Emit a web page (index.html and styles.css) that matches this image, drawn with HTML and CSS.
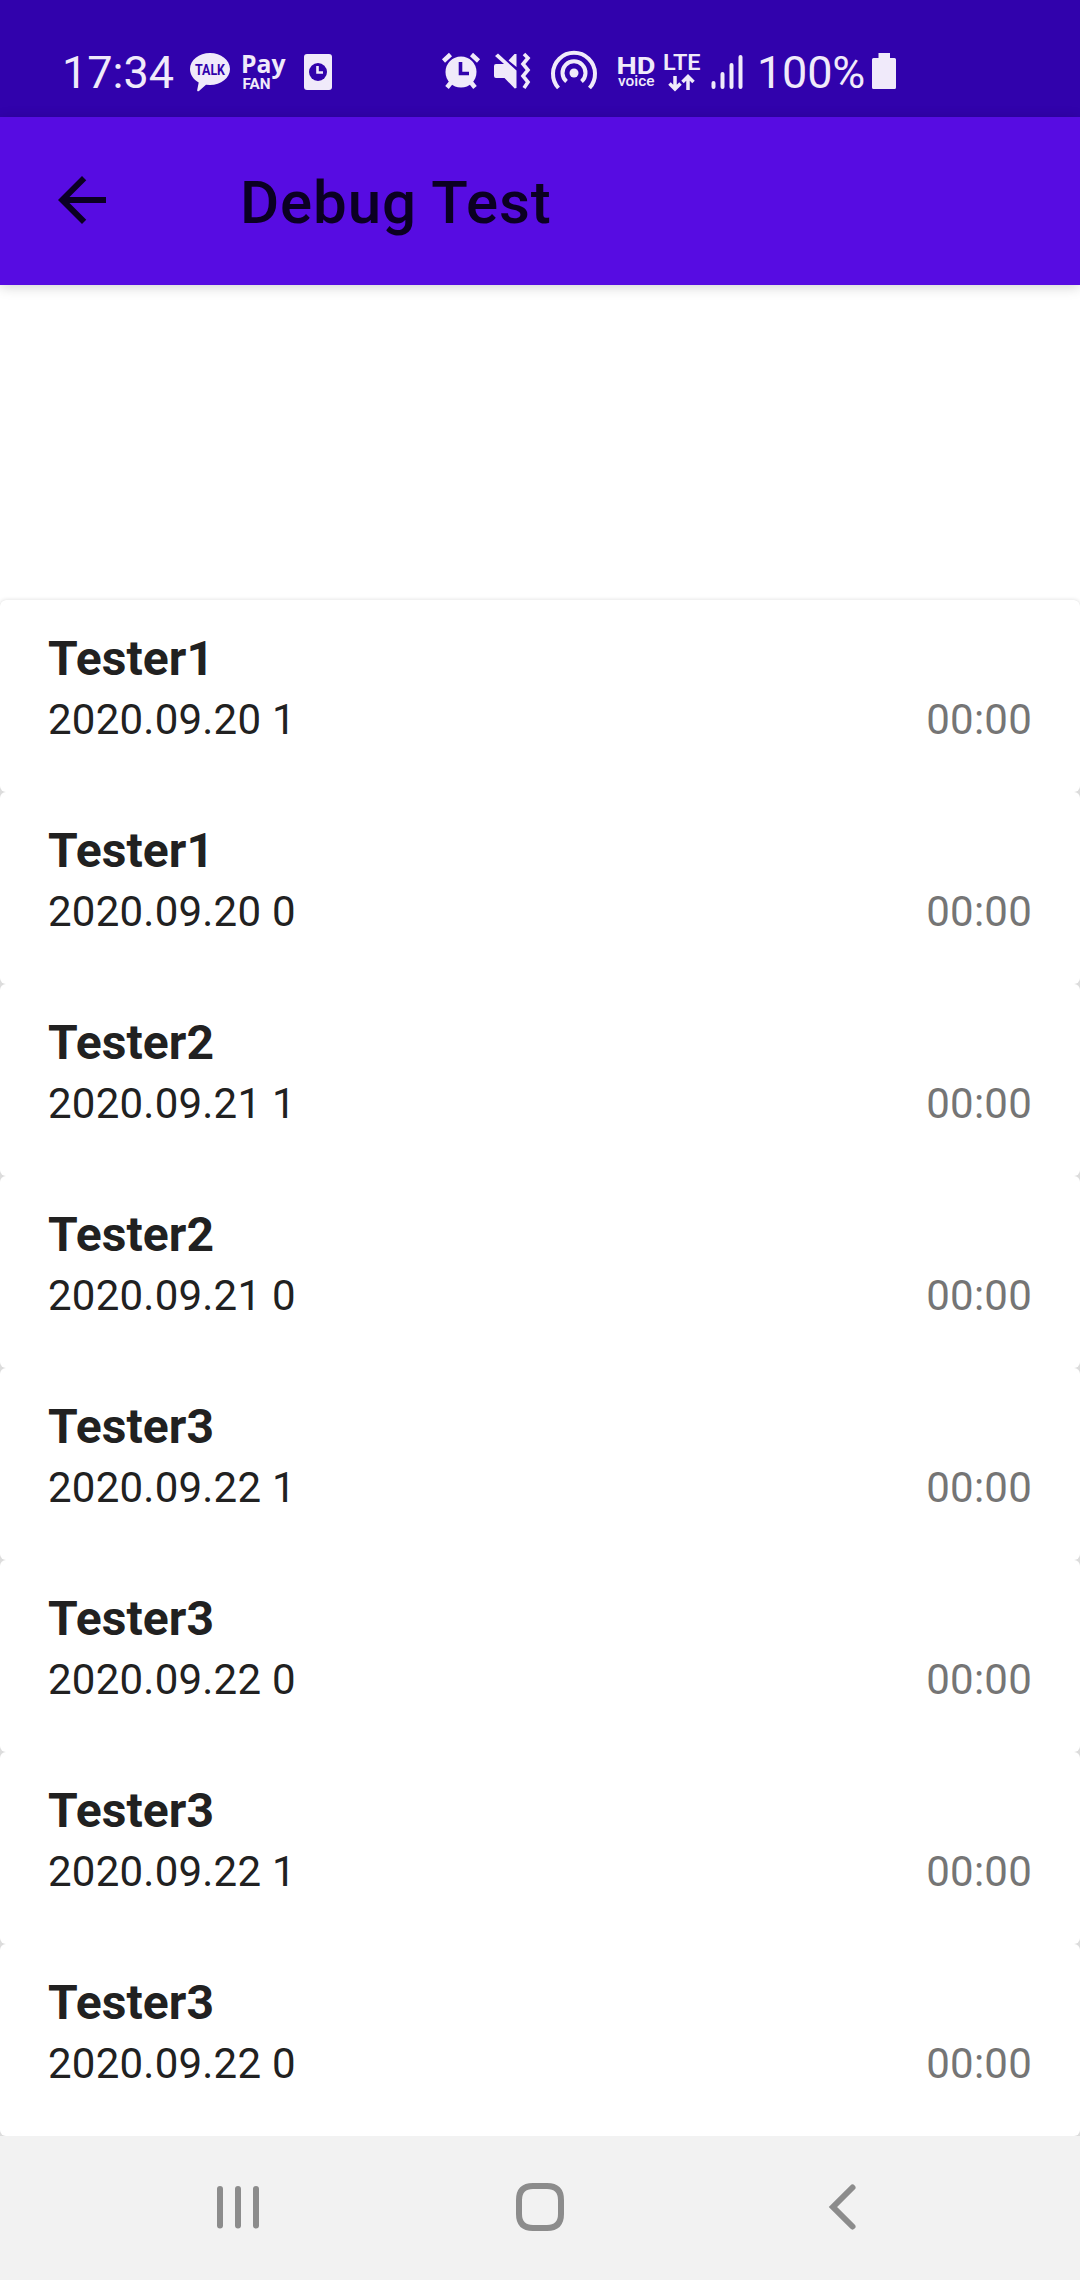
FILE: index.html
```html
<!DOCTYPE html>
<html lang="en">
<head>
<meta charset="utf-8">
<title>Debug Test</title>
<link rel="stylesheet" href="styles.css">
</head>
<body>
<div class="screen">
  <div class="status">
    <span class="clock">17:34</span>
    <svg class="talk" width="40" height="60" viewBox="190 40 40 60"><path class="fill" d="M210 53c11 0 20 7.200 20 16s-9 16-20 16l-4-.3-7 6.300c-1 .8-2 .2-1.800-1l1.500-7.500C193.500 79.500 190 74.700 190 69c0-8.800 9-16 20-16z"/><text class="ink" x="195" y="75" font-size="14.500" font-weight="700" textLength="30" lengthAdjust="spacingAndGlyphs">TALK</text></svg>
    <svg class="pay" width="44" height="60" viewBox="242 40 44 60"><text class="fill open" x="241" y="72.500" font-size="25" font-weight="700" textLength="44.500" lengthAdjust="spacingAndGlyphs">Pay</text><text class="fill" x="242.500" y="89" font-size="14.500" font-weight="700" textLength="28" lengthAdjust="spacingAndGlyphs">FAN</text></svg>
    <svg class="timer" width="28" height="60" viewBox="304 40 28 60"><rect class="fill" x="304" y="54" width="28" height="36" rx="3"/><circle class="ink" cx="318" cy="72" r="9"/><path class="line" stroke-width="2.600" d="M317.500 66v6.500h5.500"/></svg>
    <svg class="alarm" width="40" height="60" viewBox="441 40 40 60"><circle class="fill" cx="461" cy="72" r="15.500"/><path class="line" stroke-width="4.500" d="M443.500 61l7-6.500M478.500 61l-7-6.500M451 82.500l-4 5M471 82.500l4 5"/><path class="inkline" stroke-width="3.600" d="M460.500 62v11.500h8.500"/></svg>
    <svg class="mute" width="38" height="60" viewBox="493 40 38 60"><path class="fill" d="M496 64h8l-9-8 3-2.500 18.500 17V88l-1.800.5L504.500 78H496q-2-.2-2-2V66q0-1.800 2-2zM508.500 60.500l6-6.500h2v13z"/><path class="line" stroke-width="3.600" d="M524 54l4 4-5 6 5 6-5 6 5 6-4 6"/></svg>
    <svg class="spot" width="48" height="60" viewBox="550 40 48 60"><circle class="fill" cx="574" cy="73" r="4.500"/><path class="line" stroke-width="4" d="M558.500 88a21 21 0 1 1 31 0M566.500 81.500a11.500 11.500 0 1 1 15 0"/></svg>
    <svg class="hd" width="38" height="60" viewBox="617 40 38 60"><text class="fill" x="616.500" y="73.500" font-size="24" font-weight="700" textLength="39" lengthAdjust="spacingAndGlyphs">HD</text><text class="fill" x="618" y="86" font-size="15.500" font-weight="500" textLength="36.500" lengthAdjust="spacingAndGlyphs">voice</text></svg>
    <svg class="lte" width="37" height="60" viewBox="663 40 37 60"><text class="fill" x="663" y="70" font-size="22" font-weight="600" textLength="37.500" lengthAdjust="spacingAndGlyphs">LTE</text><path class="line" stroke-width="3.500" d="M675 76v12.500M669.500 83.500l5.500 5.500 5.500-5.500M688 90V77.500M682.500 82l5.500-5.500 5.500 5.500"/></svg>
    <svg class="signal" width="32" height="60" viewBox="711 40 32 60"><path class="line round" stroke-width="4" d="M713.500 83v4M722.500 74v13M731.500 65v22M740.500 57v30"/></svg>
    <span class="percent">100%</span>
    <svg class="battery" width="24" height="60" viewBox="872 40 24 60"><path class="fill" d="M878.500 53h11.500v5h4.500q1.500 0 1.500 1.500v28q0 1.500-1.500 1.500h-21q-1.500 0-1.500-1.500v-28q0-1.500 1.500-1.500h5z"/></svg>
  </div>
  <header class="appbar">
    <svg width="72" height="72" viewBox="0 0 24 24"><path d="M20 11H7.830l5.590-5.590L12 4l-8 8 8 8 1.410-1.410L7.830 13H20z"/></svg>
    <h1>Debug Test</h1>
  </header>
  <main>
    <div class="list">
      <div class="card"><b>Tester1</b><p><span>2020.09.20 1</span><time>00:00</time></p></div>
      <div class="card"><b>Tester1</b><p><span>2020.09.20 0</span><time>00:00</time></p></div>
      <div class="card"><b>Tester2</b><p><span>2020.09.21 1</span><time>00:00</time></p></div>
      <div class="card"><b>Tester2</b><p><span>2020.09.21 0</span><time>00:00</time></p></div>
      <div class="card"><b>Tester3</b><p><span>2020.09.22 1</span><time>00:00</time></p></div>
      <div class="card"><b>Tester3</b><p><span>2020.09.22 0</span><time>00:00</time></p></div>
      <div class="card"><b>Tester3</b><p><span>2020.09.22 1</span><time>00:00</time></p></div>
      <div class="card"><b>Tester3</b><p><span>2020.09.22 0</span><time>00:00</time></p></div>
    </div>
  </main>
  <nav class="navbar">
    <svg width="48" height="48" viewBox="0 0 48 48"><path d="M6 6v36.500M24 6v36.500M42 6v36.500"/></svg>
    <svg width="48" height="48" viewBox="0 0 48 48"><path d="M17 3h14q14 0 14 14v14q0 14-14 14H17Q3 45 3 31V17Q3 3 17 3z"/></svg>
    <svg width="48" height="48" viewBox="0 0 48 48"><path d="M34.500 4.500L15 24l19.500 19.500"/></svg>
  </nav>
</div>
</body>
</html>
```
FILE: styles.css
```css
* { box-sizing: border-box; }
body { margin: 0; font-family: Roboto, sans-serif; background: #fff; }
.screen { display: flex; flex-direction: column; width: 1080px; height: 2280px; }
svg { display: block; flex: none; }

.status { display: flex; height: 117px; padding: 40px 0 0 62px; background: #3102ac; color: #f0eafa; font-size: 45px; line-height: 66px; white-space: nowrap; }
.status svg { font-family: Roboto, sans-serif; overflow: visible; }
.fill { fill: #f0eafa; }
.ink { fill: #3102ac; }
.line { fill: none; stroke: #f0eafa; }
.inkline { fill: none; stroke: #3102ac; }
.round { stroke-linecap: round; }
.open { font-family: "Open Sans", sans-serif; }
.clock { width: 128px; }
.pay { margin-left: 12px; }
.timer { margin-left: 18px; }
.alarm { margin-left: 109px; }
.mute { margin-left: 12px; }
.spot { margin-left: 19px; }
.hd { margin-left: 19px; }
.lte { margin-left: 8px; }
.signal { margin-left: 11px; }
.percent { width: 115px; margin-left: 14px; letter-spacing: -.2px; }

.appbar { display: flex; align-items: center; height: 168px; padding: 0 46px; background: #570ce2; box-shadow: 0 2px 12px rgba(0,0,0,.18); position: relative; }
.appbar svg { margin-bottom: 2px; }
.appbar path { fill: #0b0022; }
.appbar h1 { margin: 4px 0 0 122px; font-size: 60px; font-weight: 500; line-height: 70px; letter-spacing: .9px; color: #0b0022; }

main { flex: 1; padding-top: 315px; }
.list { background: #dcdcdc; border-radius: 6px 6px 0 0; box-shadow: 0 0 4px rgba(0,0,0,.14); }
.card { height: 192px; padding: 31px 48px 0; border-radius: 6px; background: #fff; color: #212121; }
.card b { display: block; font-size: 48px; line-height: 56px; letter-spacing: .1px; }
.card p { display: flex; justify-content: space-between; margin: 8px 0 0; font-size: 42px; line-height: 50px; letter-spacing: .23px; }
.card time { color: #757575; }

.navbar { display: flex; justify-content: space-between; height: 144px; padding: 47px 214px 0; background: #f2f2f2; position: relative; }
.navbar path { fill: none; stroke: #8c8c8c; stroke-width: 6; stroke-linecap: round; }
```
